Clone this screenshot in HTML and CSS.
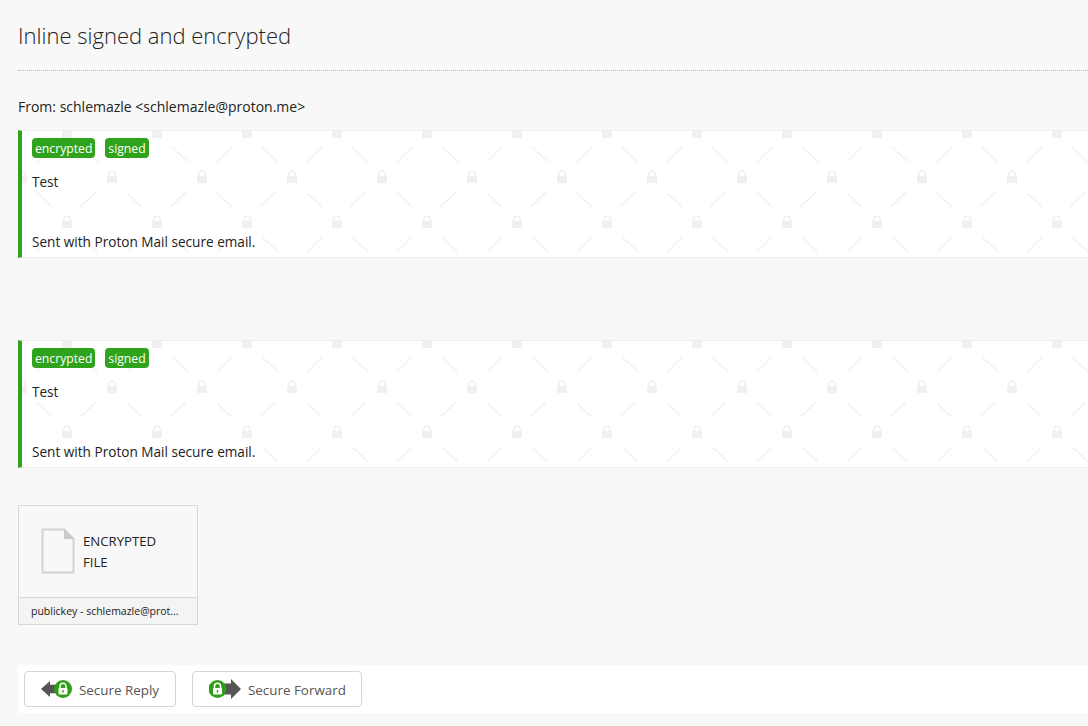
FILE: index.html
```html
<!DOCTYPE html>
<html lang="en">
<head>
    <meta charset="utf-8">
    <title>Inline signed and encrypted</title>
    <meta name="viewport" content="width=device-width, initial-scale=1.0">
    <link rel="stylesheet" href="styles.css">
</head>
<body>
    <div class="mail">
        <h1 class="subject">Inline signed and encrypted</h1>
        <p class="from">From: schlemazle &lt;schlemazle@proton.me&gt;</p>

        <div class="part">
            <div class="tags">
                <span class="tag">encrypted</span>
                <span class="tag">signed</span>
            </div>
            <p class="part-text">Test</p>
            <p class="part-sig">Sent with Proton Mail secure email.</p>
        </div>

        <div class="part">
            <div class="tags">
                <span class="tag">encrypted</span>
                <span class="tag">signed</span>
            </div>
            <p class="part-text">Test</p>
            <p class="part-sig">Sent with Proton Mail secure email.</p>
        </div>

        <div class="attachment">
            <div class="attachment-body">
                <svg class="file-icon" width="34" height="46" viewBox="0 0 34 46">
                    <path d="M1.5 1.5H23L32.5 11V44.5H1.5Z" fill="#f8f8f8" stroke="#d2d2d2" stroke-width="2" stroke-linejoin="round"/>
                    <path d="M23 0.5L33.5 11H23Z" fill="#c9c9c9"/>
                </svg>
                <span class="attachment-type">ENCRYPTED FILE</span>
            </div>
            <div class="attachment-name">publickey - schlemazle@prot...</div>
        </div>

        <div class="actions">
            <a class="btn btn-reply">
                <svg width="32" height="20" viewBox="0 0 32 20">
                    <path d="M0 10L9 2V5.8H20V14.2H9V18Z" fill="#555"/>
                    <circle cx="22" cy="10" r="9" fill="#2f9f1a"/>
                    <path d="M19 9V7.2a3 3 0 0 1 6 0V9" fill="none" stroke="#fff" stroke-width="1.5"/>
                    <rect x="17.5" y="9" width="9" height="6.5" rx="1" fill="#fff"/>
                    <rect x="21.3" y="11" width="1.4" height="2.5" fill="#2f9f1a"/>
                </svg>
                Secure Reply
            </a>
            <a class="btn btn-forward">
                <svg width="33" height="20" viewBox="0 0 33 20">
                    <path d="M10 4.5H22V0L32 10L22 20V15.5H10Z" fill="#555"/>
                    <circle cx="8.5" cy="10" r="9" fill="#2f9f1a"/>
                    <path d="M5.5 9V7.2a3 3 0 0 1 6 0V9" fill="none" stroke="#fff" stroke-width="1.5"/>
                    <rect x="4" y="9" width="9" height="6.5" rx="1" fill="#fff"/>
                    <rect x="7.8" y="11" width="1.4" height="2.5" fill="#2f9f1a"/>
                </svg>
                Secure Forward
            </a>
        </div>
    </div>
</body>
</html>
```

FILE: styles.css
```css
html, body {
    margin: 0;
    height: 726px;
    overflow: hidden;
}
body {
    font-family: "Open Sans", Arial, sans-serif;
    font-size: 13.6px;
    background-color: #f8f8f8;
    color: #222;
}
.mail {
    padding-left: 18px;
}
.subject {
    margin: 0;
    height: 71px;
    box-sizing: border-box;
    padding-top: 19px;
    font-size: 22px;
    line-height: 32px;
    font-weight: 300;
    color: #222;
    border-bottom: 1px dotted #b5b5b5;
}
.from {
    margin: 0;
    padding-top: 27px;
    line-height: 18px;
    height: 32px;
    font-size: 14px;
    color: #222;
}
.part {
    box-sizing: border-box;
    height: 128px;
    margin-bottom: 82px;
    padding: 7px 0 0 10px;
    background-color: #fff;
    background-image: url("data:image/svg+xml,%3Csvg xmlns='http://www.w3.org/2000/svg' width='90' height='90' fill='%23f0f0f0'%3E%3Cpath d='M60 16L76 31M30 16L15 31M15 62L30 76M74 61L58 76' stroke='%23f0f0f0' stroke-width='1.2'/%3E%3Crect x='40' y='0' width='10' height='7'/%3E%3Crect x='-5' y='45' width='10' height='7'/%3E%3Crect x='85' y='45' width='10' height='7'/%3E%3Cpath d='M42 90V88a3 3 0 0 1 6 0V90M-3 45V43a3 3 0 0 1 6 0V45M87 45V43a3 3 0 0 1 6 0V45' fill='none' stroke='%23f0f0f0' stroke-width='1.5'/%3E%3C/svg%3E");
    border-left: 4px solid #2fa31c;
    border-top: 1px solid #eee;
    border-bottom: 1px solid #eee;
}
.tags {
    display: flex;
    gap: 10px;
}
.tag {
    background-color: #2fa31c;
    color: #fff;
    border-radius: 4px;
    padding: 0 3px;
    height: 20px;
    line-height: 22px;
    font-size: 12.2px;
}
.part-text {
    margin: 15px 0 0;
    line-height: 18px;
}
.part-sig {
    margin: 42px 0 0;
    line-height: 18px;
}
.attachment {
    box-sizing: border-box;
    width: 180px;
    height: 120px;
    margin-top: -45px;
    border: 1px solid #d8d8d8;
    display: flex;
    flex-direction: column;
}
.attachment-body {
    flex: 1;
    display: flex;
    align-items: flex-start;
    padding: 22px 0 0 22px;
    gap: 8px;
}
.attachment-type {
    width: 90px;
    line-height: 21px;
    padding-top: 3px;
    font-size: 13.2px;
}
.attachment-name {
    height: 27px;
    box-sizing: border-box;
    line-height: 27px;
    padding: 0 12px;
    background-color: #f4f4f4;
    border-top: 1px solid #d8d8d8;
    font-size: 10.5px;
    white-space: nowrap;
}
.actions {
    margin-top: 40px;
    height: 48px;
    box-sizing: border-box;
    padding: 6px 6px;
    background-color: #fff;
    display: flex;
    gap: 16px;
}
.btn {
    box-sizing: border-box;
    height: 36px;
    display: flex;
    align-items: center;
    gap: 6px;
    padding-left: 16px;
    padding-top: 1px;
    border: 1px solid #d5d5d5;
    border-radius: 4px;
    color: #555;
    font-size: 13.4px;
}
.btn svg {
    margin-top: -1px;
}
.btn-reply {
    width: 152px;
}
.btn-forward {
    width: 170px;
}
```
